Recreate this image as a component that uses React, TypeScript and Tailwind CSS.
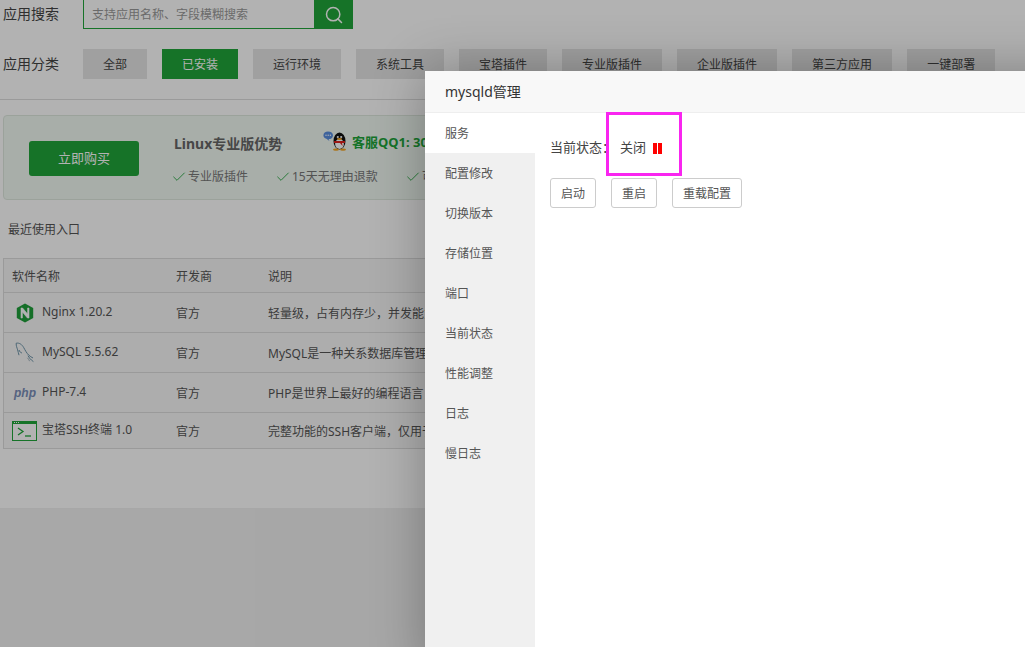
import { Check, Search } from "lucide-react"

const categories = [
  { name: "全部", active: false },
  { name: "已安装", active: true },
  { name: "运行环境", active: false },
  { name: "系统工具", active: false },
  { name: "宝塔插件", active: false },
  { name: "专业版插件", active: false },
  { name: "企业版插件", active: false },
  { name: "第三方应用", active: false },
  { name: "一键部署", active: false },
]

const perks = [
  { text: "专业版插件", width: "w-[104px]" },
  { text: "15天无理由退款", width: "w-[130px]" },
  { text: "可", width: "w-[30px]" },
]

const menu = ["服务", "配置修改", "切换版本", "存储位置", "端口", "当前状态", "性能调整", "日志", "慢日志"]

function NginxIcon() {
  return (
    <svg width="18" height="20" viewBox="0 0 18 20" className="shrink-0">
      <path d="M9 0.5 L17.2 5 V15 L9 19.5 L0.8 15 V5 Z" fill="#1f9f3a" />
      <path d="M5 15 V5 H6.6 L11.6 11 V5 H13 V15 H11.4 L6.4 9 V15 Z" fill="#fff" stroke="#fff" strokeWidth="0.6" />
    </svg>
  )
}

function MysqlIcon() {
  return (
    <svg width="20" height="22" viewBox="0 0 20 22" fill="none" className="shrink-0">
      <path
        d="M1.2 1.2 C4.5 0.6 7 2.6 8.6 5.4 C10 8 11.6 11 13.6 13 C15 14.4 16.6 15.2 18 16 M1.2 1.2 C1 4 2 5.6 2.6 7.8 C3 9.6 3.6 11.2 4 13.2 M4 8 C4.6 10 5.8 10.6 7 11 M13 13.6 C14.2 15.6 15.2 17.4 18.4 19.6"
        stroke="#6c93a8"
        strokeWidth="1"
      />
      <path d="M12.4 15.8 C13.4 17 14 17.6 14.6 19.2" stroke="#8aa0ad" strokeWidth="0.8" />
    </svg>
  )
}

function TerminalIcon() {
  return (
    <svg width="25" height="20" viewBox="0 0 25 20" fill="none" className="shrink-0">
      <rect x="0.5" y="0.5" width="24" height="19" fill="#fff" stroke="#20a53a" />
      <rect x="0" y="0" width="25" height="3" fill="#20a53a" />
      <rect x="2" y="1" width="1" height="1" fill="#fff" />
      <rect x="4" y="1" width="1" height="1" fill="#fff" />
      <rect x="6" y="1" width="1" height="1" fill="#fff" />
      <path d="M6 7 L11 10.5 L6 14" stroke="#20a53a" strokeWidth="1.3" />
      <path d="M13 15 H19" stroke="#20a53a" strokeWidth="1.3" />
    </svg>
  )
}

function QqIcon() {
  return (
    <svg width="24" height="20" viewBox="0 0 24 20" className="shrink-0">
      <path d="M5 0.5 C8 0.5 10 2 10 4.4 C10 6.8 8 8 5.6 8 L6.4 10 L3.4 7.8 C1.6 7.2 0.4 6 0.4 4.4 C0.4 2 2.4 0.5 5 0.5 Z" fill="#5a8fe0" />
      <circle cx="3" cy="4.2" r="0.7" fill="#fff" />
      <circle cx="5.2" cy="4.2" r="0.7" fill="#fff" />
      <circle cx="7.4" cy="4.2" r="0.7" fill="#fff" />
      <ellipse cx="16.5" cy="10" rx="6" ry="8.6" fill="#111" />
      <ellipse cx="16.5" cy="13" rx="4.4" ry="5" fill="#fff" />
      <circle cx="14.8" cy="6" r="1.1" fill="#fff" />
      <circle cx="18.2" cy="6" r="1.1" fill="#fff" />
      <ellipse cx="16.5" cy="8" rx="2.6" ry="1" fill="#f5a623" />
      <path d="M11 10 H22 V12 H19 L19.6 15 L17 12 H11 Z" fill="#e0201c" />
      <ellipse cx="13" cy="18.6" rx="3" ry="1.2" fill="#f5a623" />
      <ellipse cx="20" cy="18.6" rx="3" ry="1.2" fill="#f5a623" />
    </svg>
  )
}

const rows = [
  { icon: <NginxIcon />, iconBox: "pl-[4px] pr-[8px]", name: "Nginx 1.20.2", desc: "轻量级，占有内存少，并发能力强，是当前最流行的Web服务器之一", h: "h-[40px]" },
  { icon: <MysqlIcon />, iconBox: "pl-[3px] pr-[7px]", name: "MySQL 5.5.62", desc: "MySQL是一种关系数据库管理系统，应用广泛，支持多种存储引擎", h: "h-[40px]" },
  {
    icon: <span className="w-[20px] text-[12px] font-bold italic text-[#7a8eb8] [font-family:'Liberation_Sans',sans-serif]">php</span>,
    iconBox: "pl-[2px] pr-[8px]",
    name: "PHP-7.4",
    desc: "PHP是世界上最好的编程语言，被广泛用于网站开发",
    h: "h-[40px]",
  },
  { icon: <TerminalIcon />, iconBox: "pr-[5px]", name: "宝塔SSH终端 1.0", desc: "完整功能的SSH客户端，仅用于连接本服务器，支持多会话", h: "h-[35px]" },
]

export default function App() {
  return (
    <div className="relative h-[647px] w-[1025px] overflow-hidden bg-[#f0f0f0] text-[12px] text-[#555] [font-family:'Noto_Sans','Noto_Sans_CJK_SC',sans-serif]">
      {/* PAGE UNDER THE SHADE */}
      <div className="h-[508px] bg-white">
        <div className="flex h-[29px] items-center">
          <span className="w-[83px] pb-[2px] pl-[3px] text-[14px] text-[#444]">应用搜索</span>
          <div className="flex h-[29px] w-[231px] items-center border-b border-l border-[#20a53a] pl-[8px] pt-[2px] text-[#999]">
            支持应用名称、字段模糊搜索
          </div>
          <div className="flex h-[29px] w-[39px] items-center justify-center bg-[#20a53a]">
            <Search size={20} strokeWidth={1.8} color="#fff" />
          </div>
        </div>

        <div className="mt-[20px] flex h-[30px] items-center">
          <span className="w-[83px] pb-[2px] pl-[3px] text-[14px] text-[#444]">应用分类</span>
          <div className="flex gap-[15px]">
            {categories.map((c) => (
              <div
                key={c.name}
                className={
                  c.active
                    ? "flex h-[30px] items-center bg-[#20a53a] px-[20px] pt-[2px] text-white"
                    : "flex h-[30px] items-center bg-[#e6e6e6] px-[20px] pt-[2px] text-[#444]"
                }
              >
                {c.name}
              </div>
            ))}
          </div>
        </div>

        <div className="mt-[20px] h-px bg-[#ddd]" />

        {/* PROMO */}
        <div className="ml-[3px] mt-[15px] flex h-[85px] w-[1010px] items-center rounded-[4px] border border-[#dfe8df] bg-[#f1f9f3]">
          <div className="ml-[25px] mt-[2px] flex h-[35px] w-[110px] items-center justify-center rounded-[3px] bg-[#20a53a] text-[13px] text-white">
            立即购买
          </div>
          <div className="ml-[32px] mt-[3px] flex flex-col">
            <div className="flex items-center">
              <span className="w-[152px] pl-[3px] text-[14px] font-bold text-[#666]">Linux专业版优势</span>
              <span className="-mt-[4px]"><QqIcon /></span>
              <span className="ml-[5px] text-[13px] font-bold text-[#20a53a]">客服QQ1: 30</span>
            </div>
            <div className="mt-[14px] flex">
              {perks.map((p) => (
                <div key={p.text} className={`flex items-center gap-[1px] ${p.width}`}>
                  <Check size={16} strokeWidth={1.3} color="#20a53a" />
                  <span className="whitespace-nowrap text-[#777]">{p.text}</span>
                </div>
              ))}
            </div>
          </div>
        </div>

        <div className="ml-[8px] mt-[21px] text-[#555]">最近使用入口</div>

        {/* TABLE */}
        <div className="ml-[3px] mt-[19px] w-[1015px] border border-[#ddd]">
          <div className="flex h-[34px] items-center border-b border-[#ddd] bg-[#f6f6f6] pt-[2px]">
            <span className="w-[172px] pl-[8px]">软件名称</span>
            <span className="w-[92px]">开发商</span>
            <span>说明</span>
          </div>
          {rows.map((r, i) => (
            <div
              key={r.name}
              className={
                i < rows.length - 1
                  ? `flex ${r.h} items-center border-b border-[#ddd] bg-[#f8f8f8] pt-[2px]`
                  : `flex ${r.h} items-center bg-[#f8f8f8] pt-[2px]`
              }
            >
              <div className="flex w-[172px] items-center pl-[8px]">
                <span className={`-mt-[2px] flex items-center ${r.iconBox}`}>{r.icon}</span>
                <span className="-mt-[3px] whitespace-nowrap">{r.name}</span>
              </div>
              <span className="w-[92px]">官方</span>
              <span className="whitespace-nowrap">{r.desc}</span>
            </div>
          ))}
        </div>
      </div>

      {/* SHADE */}
      <div className="absolute inset-0 bg-black/30" />

      {/* MYSQLD DIALOG */}
      <div className="absolute left-[425px] top-[71px] h-[600px] w-[700px] bg-white text-[#555] shadow-[1px_1px_50px_rgba(0,0,0,0.3)]">
        <div className="flex h-[42px] items-center border-b border-[#eee] bg-[#f8f8f8] pl-[20px] text-[14px] text-[#333]">
          mysqld管理
        </div>
        <div className="flex h-[558px]">
          <div className="w-[110px] bg-[#f0f0f0]">
            {menu.map((m, i) => (
              <div
                key={m}
                className={
                  i === 0
                    ? "flex h-[40px] items-center bg-white pl-[20px] pt-[2px] text-[#555]"
                    : "flex h-[40px] items-center pl-[20px] pt-[2px] text-[#555]"
                }
              >
                {m}
              </div>
            ))}
          </div>
          <div className="flex-1 pl-[15px] pt-[25px]">
            <div className="flex h-[20px] items-center text-[13px] text-[#444]">
              <span className="w-[70px]">当前状态：</span>
              <span>关闭</span>
              <span className="ml-[7px] flex gap-[1px]">
                <span className="h-[11px] w-[4px] bg-[#f00]" />
                <span className="h-[11px] w-[4px] bg-[#f00]" />
              </span>
            </div>
            <div className="mt-[20px] flex gap-[15px]">
              <button className="h-[30px] w-[46px] rounded-[3px] border border-[#ccc] bg-white pt-[2px] text-[#555]">启动</button>
              <button className="h-[30px] w-[46px] rounded-[3px] border border-[#ccc] bg-white pt-[2px] text-[#555]">重启</button>
              <button className="h-[30px] w-[70px] rounded-[3px] border border-[#ccc] bg-white pt-[2px] text-[#555]">重载配置</button>
            </div>
          </div>
        </div>
      </div>

      {/* ANNOTATION BOX */}
      <div className="absolute left-[606px] top-[112px] h-[64px] w-[76px] border-[3px] border-[#f925f0]" />
    </div>
  )
}
